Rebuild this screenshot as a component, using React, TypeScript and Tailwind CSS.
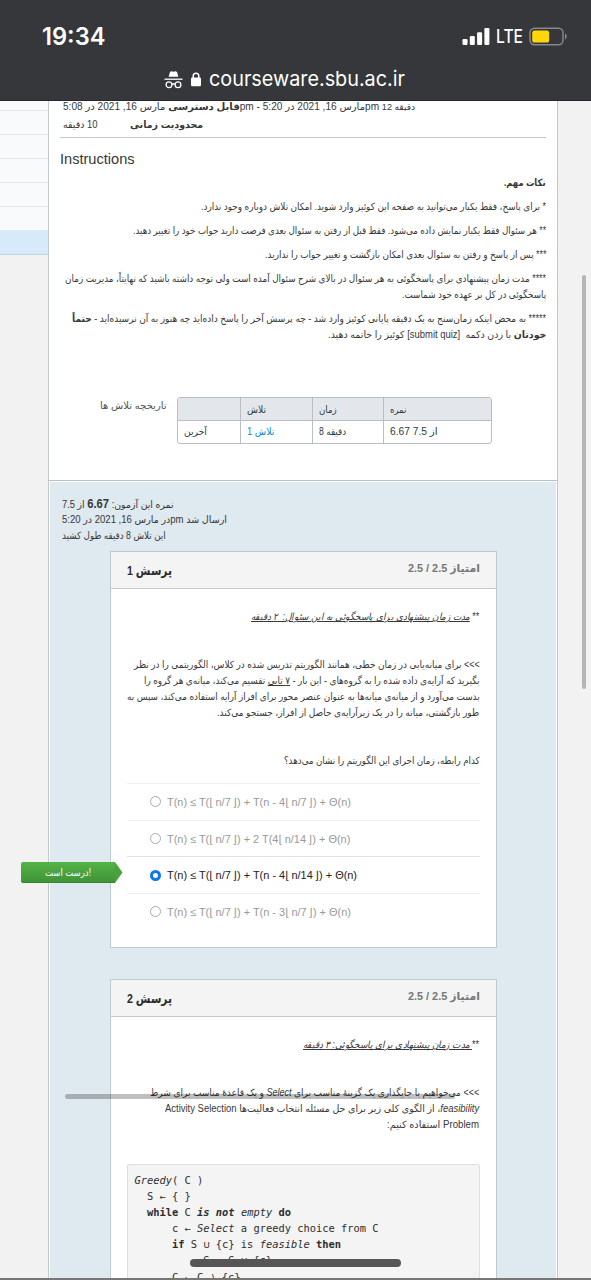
import { useLayoutEffect, useRef, useState } from 'react';
import type { ReactNode } from 'react';

type FitProps = { w: number; rtl?: boolean; end?: boolean; className?: string; children: ReactNode };

/* A single line of text, condensed or stretched to a given measure. */
function Fit({ w, rtl, end, className = '', children }: FitProps) {
  const ref = useRef<HTMLSpanElement>(null);
  const [scale, setScale] = useState(1);
  useLayoutEffect(() => {
    if (ref.current) setScale(w / ref.current.offsetWidth);
  }, [w]);
  return (
    <div className={`flex h-4 items-center whitespace-nowrap leading-4 ${end ? 'justify-end' : 'justify-start'} ${className}`}>
      <span
        ref={ref}
        dir={rtl ? 'rtl' : 'ltr'}
        className={`block shrink-0 ${end ? 'origin-right' : 'origin-left'}`}
        style={{ transform: `scaleX(${scale})` }}
      >
        {children}
      </span>
    </div>
  );
}

function StatusBar() {
  return (
    <header className="h-[101px] shrink-0 border-b border-[#25272a] bg-[#35373b] font-['Inter',sans-serif] text-white">
      <div className="flex h-[68px] items-start pt-[22px] pr-[23px] pl-[42px]">
        <Fit w={63} className="mt-[7px] text-[24px] font-semibold">19:34</Fit>
        <svg className="mt-[6px] ml-auto h-[17px] w-[28px]" viewBox="0 0 28 17" fill="white">
          <rect x="0.5" y="11" width="5" height="6" rx="1.2" />
          <rect x="7.8" y="8" width="5" height="9" rx="1.2" />
          <rect x="15.1" y="4.2" width="5" height="12.8" rx="1.2" />
          <rect x="22.4" y="0" width="5" height="17" rx="1.2" />
        </svg>
        <div className="ml-[6px] w-[33px]">
          <Fit w={27} className="mt-[7px] text-[18px] font-medium">LTE</Fit>
        </div>
        <svg className="mt-[5px] h-[19px] w-[39px]" viewBox="0 0 39 19" fill="none">
          <rect x="1" y="1.2" width="33" height="16.6" rx="4.5" stroke="#85878a" strokeWidth="1.5" />
          <rect x="3.2" y="3.4" width="17" height="12.2" rx="2.6" fill="#ffd60a" />
          <path d="M36 6.5v6c2.3-1 2.3-5 0-6z" fill="#85878a" />
        </svg>
      </div>
      <div className="flex items-center pl-[164px]">
        <svg className="h-[19px] w-[19px]" viewBox="0 0 19 19" fill="none" stroke="white" strokeWidth="1.3">
          <path d="M4.6 6.7 6 2.1 7.3 1.3l2.2.5 2.2-.5 1.3.8 1.4 4.6z" fill="white" stroke="none" />
          <path d="M.5 9.2h18" />
          <circle cx="5" cy="14.8" r="2.9" />
          <circle cx="14" cy="14.8" r="2.9" />
          <path d="M7.9 14.4c1-.8 2.2-.8 3.2 0" />
        </svg>
        <svg className="ml-[8px] h-[15px] w-[10px]" viewBox="0 0 10 15">
          <path d="M2.2 6V4a2.8 2.8 0 0 1 5.6 0v2" fill="none" stroke="white" strokeWidth="1.5" />
          <rect x="0" y="5.6" width="10" height="8.6" rx="1.3" fill="white" />
        </svg>
        <Fit w={196} className="ml-[8px] h-[22px] text-[20.5px]">courseware.sbu.ac.ir</Fit>
      </div>
    </header>
  );
}

function Notes() {
  return (
    <div className="text-[10px]">
      <Fit end rtl w={42} className="font-bold">نکات مهم.</Fit>
      <Fit end rtl w={345} className="mt-2">* برای پاسخ، فقط یکبار می‌توانید به صفحه این کوئیز وارد شوید. امکان تلاش دوباره وجود ندارد.</Fit>
      <Fit end rtl w={413} className="mt-2">** هر سئوال فقط یکبار نمایش داده می‌شود. فقط قبل از رفتن به سئوال بعدی فرصت دارید جواب خود را تغییر دهید.</Fit>
      <Fit end rtl w={281} className="mt-2">*** پس از پاسخ و رفتن به سئوال بعدی امکان بازگشت و تغییر جواب را ندارید.</Fit>
      <Fit end rtl w={481} className="mt-2">**** مدت زمان پیشنهادی برای پاسخگوئی به هر سئوال در بالای شرح سئوال آمده است ولی توجه داشته باشید که نهایتاً، مدیریت زمان</Fit>
      <Fit end rtl w={144}>پاسخگوئی در کل بر عهده خود شماست.</Fit>
      <Fit end rtl w={474} className="mt-2">***** به محض اینکه زمان‌سنج به یک دقیقه پایانی کوئیز وارد شد - چه پرسش آخر را پاسخ داده‌اید چه هنوز به آن نرسیده‌اید - <b>حتماً</b></Fit>
      <Fit end rtl w={218}><b>خودتان</b> با زدن دکمه&nbsp; [submit quiz] کوئیز را خاتمه دهید.</Fit>
    </div>
  );
}

function History() {
  const cell = 'h-[22px] border-[#b9bec4] pl-[6px] pt-[3px]';
  return (
    <div className="mt-[54px] flex text-[10px]">
      <div className="w-[117px] pt-px pl-[40px]"><Fit w={67} rtl className="text-[#555]">تاریخچه تلاش ها</Fit></div>
      <div className="grid w-[315px] grid-cols-[62px_72px_71px_1fr] grid-rows-[23px_22px] overflow-hidden rounded-[3px] border border-[#b9bec4] text-[#2d3b45]">
        <div className="border-b border-[#b9bec4] bg-[#e3e7ec]" />
        <div className="border-b border-l border-[#b9bec4] bg-[#e3e7ec] pt-[4px] pl-[6px]"><Fit rtl w={19}>تلاش</Fit></div>
        <div className="border-b border-l border-[#b9bec4] bg-[#e3e7ec] pt-[4px] pl-[6px]"><Fit rtl w={18}>زمان</Fit></div>
        <div className="border-b border-l border-[#b9bec4] bg-[#e3e7ec] pt-[4px] pl-[6px]"><Fit rtl w={16}>نمره</Fit></div>
        <div className={cell}><Fit rtl w={23}>آخرین</Fit></div>
        <div className={`${cell} border-l text-[#0f8bd0]`}><Fit w={27}>تلاش 1</Fit></div>
        <div className={`${cell} border-l`}><Fit w={27}>8 دقیقه</Fit></div>
        <div className={`${cell} border-l`}><Fit w={48}>6.67 7.5 از</Fit></div>
      </div>
    </div>
  );
}

function QuestionHead({ n }: { n: number }) {
  return (
    <div className="flex h-[37px] justify-between border-b border-[#c3c8cb] bg-[#f4f4f4] px-[16px]">
      <Fit rtl w={45} className="mt-[11px] text-[13px] font-bold text-[#2b2b2b]">پرسش {n}</Fit>
      <Fit end rtl w={72} className="mt-[8px] text-[11px] font-bold text-[#777]">امتیاز <bdi dir="ltr">2.5 / 2.5</bdi></Fit>
    </div>
  );
}

function Floor({ children }: { children: ReactNode }) {
  return (
    <>
      <span className="pr-[2px]">⌊</span>{children}<span className="pl-[2px]">⌋</span>
    </>
  );
}

function Answer({ w, checked, children }: { w: number; checked?: boolean; children: ReactNode }) {
  return (
    <div className={`flex h-[36.7px] items-center border-t pl-[23px] ${checked ? 'border-[#dfe2e4] text-[#222]' : 'border-[#f0f0f0] text-[#999]'}`}>
      <span className={`h-[11px] w-[11px] shrink-0 rounded-full ${checked ? 'border-[3.5px] border-[#0a78ee] bg-white' : 'border border-[#aaa]'}`} />
      <Fit w={w} className="ml-[6px] text-[11px]">{children}</Fit>
    </div>
  );
}

function CodeBlock() {
  return (
    <pre className="mt-[31px] h-[180px] rounded-[2px] border border-[#dcdfe0] bg-[#f4f4f4] pt-[7px] pl-[7px] font-['DejaVu_Sans_Mono',monospace] text-[10.4px] leading-[16.1px] text-[#2d2d2d]">
      <i>Greedy</i>{'( C )\n  S ← { }\n  '}
      <b>while</b>{' C '}<b><i>is not</i></b>{' '}<i>empty</i>{' '}<b>do</b>{'\n      c ← '}
      <i>Select</i>{' a greedy choice from C\n      '}
      <b>if</b>{' S ∪ {c} is '}<i>feasible</i>{' '}<b>then</b>{'\n           S ← S ∪ {c}\n      C ← C ∖ {c}'}
    </pre>
  );
}

export default function App() {
  return (
    <div className="relative flex h-[1280px] w-[591px] flex-col overflow-hidden bg-[#f2f2f2] font-['Liberation_Sans','DejaVu_Sans',sans-serif] text-[#383838]">
      <StatusBar />
      <div className="flex h-[1179px]">
        <aside className="w-[48px] shrink-0">
          <div className="h-[10px] border-b border-[#e3e6e9] bg-[#f9fafc]" />
          <div className="h-[24px] border-b border-[#e3e6e9] bg-[#f9fafc]" />
          <div className="h-[24px] border-b border-[#e3e6e9] bg-[#f9fafc]" />
          <div className="h-[24px] border-b border-[#e3e6e9] bg-[#f9fafc]" />
          <div className="h-[24px] border-b border-[#e3e6e9] bg-[#f9fafc]" />
          <div className="h-[24px] border-b border-[#e3e6e9] bg-[#f9fafc]" />
          <div className="h-[24px] border-b border-[#bcd3e3] bg-[#d6eafa]" />
        </aside>
        <main className="w-[510px] shrink-0 border-x border-[#c4c8cc] bg-white">
          <section className="h-[380px] overflow-hidden border-b border-[#b8c0c6] px-[11px]">
            <div className="pl-[3px] text-[10px]">
              <Fit w={352} className="-mt-[2px]"><b>قابل دسترسی</b> مارس 16, 2021 در 5:08pm - مارس 16, 2021 در 5:20pm <span className="text-[9px]">12 دقیقه</span></Fit>
              <div className="mt-[2px] flex">
                <div className="w-[67px]"><Fit rtl w={35}>10 دقیقه</Fit></div>
                <Fit rtl w={73} className="font-bold">محدودیت زمانی</Fit>
              </div>
            </div>
            <div className="mt-[4px] h-px bg-[#c4c8ca]" />
            <Fit w={75} className="mt-[13px] mb-[8px] text-[14px]">Instructions</Fit>
            <Notes />
            <History />
          </section>
          <section className="mx-px mt-px h-[800px] bg-[#dee9f0] pl-[59.5px]">
            <div className="-ml-[47.5px] pt-[14px] text-[10px]">
              <Fit rtl w={112}>نمره این آزمون: <b className="text-[12px]">6.67</b> از 7.5</Fit>
              <Fit w={165}>در مارس 16, 2021 در 5:20pm ارسال شد</Fit>
              <Fit rtl w={104}>این تلاش 8 دقیقه طول کشید</Fit>
            </div>
            <article className="mt-[7px] h-[397px] w-[387px] border border-[#bfc9ce] bg-white">
              <QuestionHead n={1} />
              <div className="px-[16px] pt-[20px] text-[10px]">
                <Fit end rtl w={228}>** <u className="italic">مدت زمان پیشنهادی برای پاسخگوئی به این سئوال:&nbsp; ۲ دقیقه</u></Fit>
                <Fit end rtl w={346} className="mt-8">&gt;&gt;&gt; برای میانه‌یابی در زمان خطی، همانند الگوریتم تدریس شده در کلاس، الگوریتمی را در نظر</Fit>
                <Fit end rtl w={336}>بگیرید که آرایه‌ی داده شده را به گروه‌های - این بار - <u>۷ تایی</u> تقسیم می‌کند، میانه‌ی هر گروه را</Fit>
                <Fit end rtl w={353}>بدست می‌آورد و از میانه‌ی میانه‌ها به عنوان عنصر محور برای افراز آرایه استفاده می‌کند، سپس به</Fit>
                <Fit end rtl w={262}>طور بازگشتی، میانه را در یک زیرآرایه‌ی حاصل از افراز، جستجو می‌کند.</Fit>
                <Fit end rtl w={196} className="mt-8 mb-[14px]">کدام رابطه، زمان اجرای این الگوریتم را نشان می‌دهد؟</Fit>
                <Answer w={184}>T(n) ≤ T(<Floor>n/7</Floor>) + T(n - 4<Floor>n/7</Floor>) + Θ(n)</Answer>
                <Answer w={183}>T(n) ≤ T(<Floor>n/7</Floor>) + 2 T(4<Floor>n/14</Floor>) + Θ(n)</Answer>
                <Answer w={190} checked>T(n) ≤ T(<Floor>n/7</Floor>) + T(n - 4<Floor>n/14</Floor>) + Θ(n)</Answer>
                <Answer w={184}>T(n) ≤ T(<Floor>n/7</Floor>) + T(n - 3<Floor>n/7</Floor>) + Θ(n)</Answer>
              </div>
            </article>
            <article className="mt-[31px] h-[310px] w-[387px] border border-[#bfc9ce] bg-white">
              <QuestionHead n={2} />
              <div className="px-[16px] pt-[20px] text-[10px]">
                <Fit end rtl w={176}>**<u className="italic"> مدت زمان پیشنهادی برای پاسخگوئی: ۳ دقیقه</u></Fit>
                <Fit end rtl w={329} className="mt-8">&gt;&gt;&gt; می‌خواهیم با جایگذاری یک گزینهٔ مناسب برای <i>Select</i> و یک قاعدهٔ مناسب برای شرط</Fit>
                <Fit end rtl w={314}><i>feasibility</i>، از الگوی کلی زیر برای حل مسئله انتخاب فعالیت‌ها Activity Selection</Fit>
                <Fit end rtl w={92}>Problem استفاده کنیم:</Fit>
                <CodeBlock />
              </div>
            </article>
          </section>
        </main>
      </div>
      <div className="absolute top-[862px] left-[21px] flex">
        <div className="h-[21px] w-[94px] rounded-l-[2px] border-b border-[#37852f] bg-linear-to-b from-[#54b348] to-[#3f9437] pt-[3px] pl-[24px] text-[10px] text-white">
          <Fit w={46}>درست است!</Fit>
        </div>
        <svg className="h-[21px] w-[8px]" viewBox="0 0 8 21"><path d="M0 0 7.5 10.5 0 21z" fill="#48a33e" /></svg>
      </div>
      <div className="absolute top-[275px] left-[582px] h-[414px] w-[4px] rounded-full bg-[#b5b5b5]" />
      <div className="absolute top-[1094px] left-[65px] h-[5px] w-[390px] rounded-full bg-black/25" />
      <div className="absolute top-[1259px] left-[190px] h-[8px] w-[211px] rounded-full bg-[#565656]" />
      <div className="absolute top-[1278px] left-0 h-[2px] w-[591px] bg-[#777]" />
    </div>
  );
}
